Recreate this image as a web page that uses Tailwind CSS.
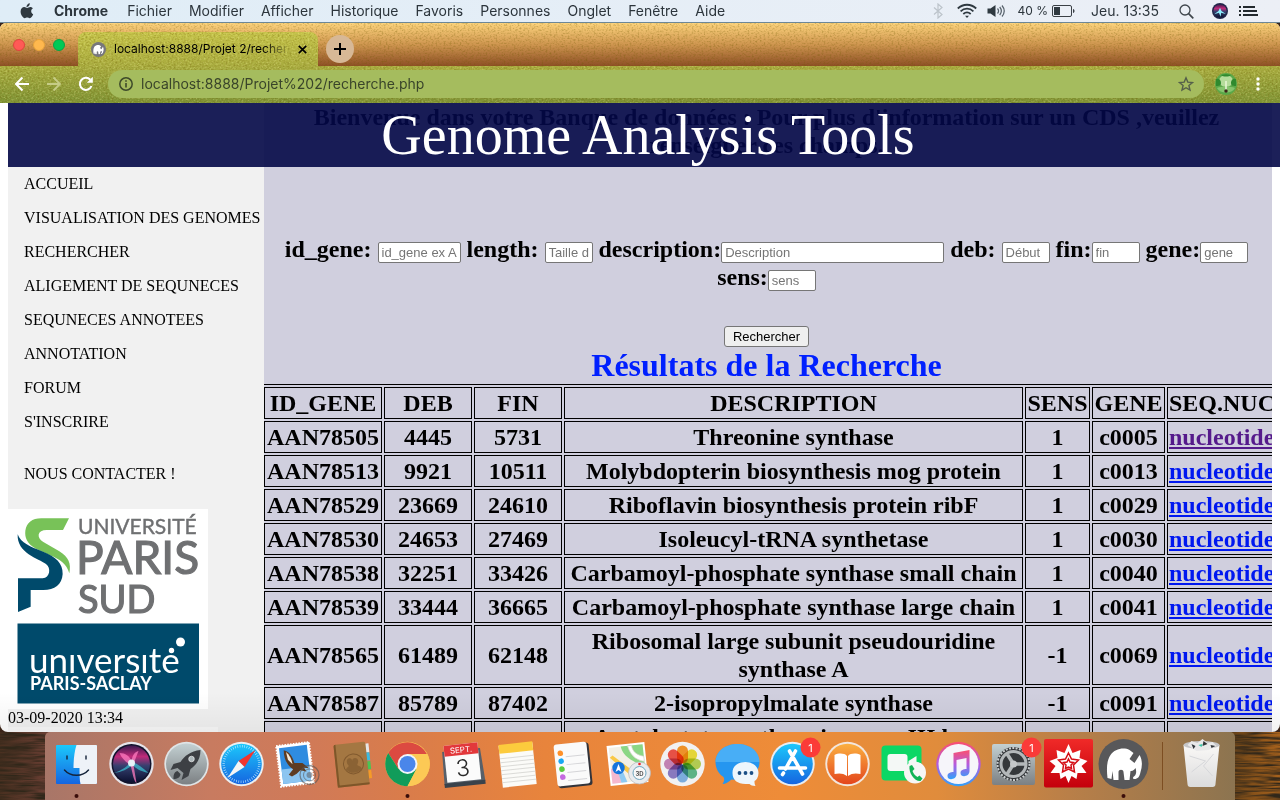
<!DOCTYPE html>
<html lang="fr">
<head>
<meta charset="utf-8">
<title>Genome Analysis Tools</title>
<script src="https://cdn.jsdelivr.net/npm/@tailwindcss/browser@4"></script>
</head>
<body class="h-screen overflow-hidden bg-[#3a2418] font-['Inter','Liberation_Sans',sans-serif] text-black">
<svg class="absolute h-0 w-0" aria-hidden="true">
  <defs>
    <filter id="grain" x="0" y="0" width="100%" height="100%"><feTurbulence type="fractalNoise" baseFrequency="0.5 0.6" numOctaves="2" seed="4"/><feColorMatrix values="0 0 0 0 0.15  0 0 0 0 0.1  0 0 0 0 0  2.2 0 0 0 -1"/></filter>
    <filter id="glint" x="0" y="0" width="100%" height="100%"><feTurbulence type="fractalNoise" baseFrequency="0.5 0.6" numOctaves="2" seed="9"/><feColorMatrix values="0 0 0 0 1  0 0 0 0 1  0 0 0 0 0.4  2.2 0 0 0 -1"/></filter>
    <filter id="wood" x="0" y="0" width="100%" height="100%"><feTurbulence type="fractalNoise" baseFrequency="0.03 0.4" numOctaves="3" seed="3"/><feColorMatrix values="0 0 0 0 0.03  0 0 0 0 0.02  0 0 0 0 0.01  2.4 0 0 0 -0.8"/></filter>
    <linearGradient id="siri" x1="0" y1="0" x2="0" y2="1"><stop offset="0" stop-color="#3b1a4f"/><stop offset=".3" stop-color="#c02a7a"/><stop offset=".55" stop-color="#35406f"/><stop offset="1" stop-color="#0c1030"/></linearGradient>
    <linearGradient id="silver" x1="0" y1="0" x2="0" y2="1"><stop offset="0" stop-color="#c3d0d2"/><stop offset="1" stop-color="#7c8083"/></linearGradient>
    <linearGradient id="sky" x1="0" y1="0" x2="0" y2="1"><stop offset="0" stop-color="#1cc8fb"/><stop offset="1" stop-color="#1565e0"/></linearGradient>
    <linearGradient id="books" x1="0" y1="0" x2="0" y2="1"><stop offset="0" stop-color="#fbb040"/><stop offset="1" stop-color="#e4461c"/></linearGradient>
    <linearGradient id="note" x1="0" y1="0" x2="0" y2="1"><stop offset="0" stop-color="#fb4f6e"/><stop offset=".5" stop-color="#b45be0"/><stop offset="1" stop-color="#2fa0fa"/></linearGradient>
    <linearGradient id="paper" x1="0" y1="0" x2="0" y2="1"><stop offset="0" stop-color="#ffffff"/><stop offset="1" stop-color="#dfe1e4"/></linearGradient>
    <linearGradient id="red" x1="0" y1="0" x2="0" y2="1"><stop offset="0" stop-color="#f02a28"/><stop offset="1" stop-color="#c4000c"/></linearGradient>
    <symbol id="elephant" viewBox="0 0 36 34"><path fill="#fff" d="M1 31C0 22 0 14 4 8 8 2 17 0 23 3l4 3-4 6 5 4 5-8c3 5 3 11 1 17-1 5-3 7-6 7-2 0-2-2 0-3 2-2 2-5 1-8-2 3-4 3-5 3l-1 9h-5l-1-8c0-3-5-3-5 0v8H7l-1-9-1 8z"/></symbol>
  </defs>
</svg>

<div class="flex h-screen flex-col">
  <!-- System menu bar -->
  <header class="flex h-[23px] shrink-0 items-center border-b border-[#6d8796] bg-linear-to-r from-[#dfedf7] to-[#eceff6] text-[14px] leading-[22px] text-[#2c353c]">
    <svg class="ml-5 mr-5 h-[16px] w-[14px]" viewBox="0 0 14 16" fill="#2f3940"><path d="M9.800.2c.1 1.200-.4 2.100-1 2.800-.6.700-1.500 1.200-2.300 1.100-.1-1.100.4-2.100 1-2.700C8.100.700 9 .3 9.800.2zM12.800 5.500c-1 .6-1.600 1.500-1.600 2.700 0 1.400.8 2.500 2 3-.5 1.500-2 4-3.500 4-1 0-1.400-.6-2.500-.6s-1.600.6-2.500.6C3 15.200.6 11.800.6 8.600c0-2.900 1.800-4.500 3.700-4.500 1.200 0 2.100.8 2.900.8.700 0 1.800-.9 3.200-.9 1 0 1.900.5 2.400 1.500z"/></svg>
    <nav class="flex gap-[17px] whitespace-nowrap">
      <a href="#" class="mr-0.5 font-bold">Chrome</a><a href="#">Fichier</a><a href="#">Modifier</a><a href="#">Afficher</a><a href="#">Historique</a><a href="#">Favoris</a><a href="#">Personnes</a><a href="#">Onglet</a><a href="#">Fenêtre</a><a href="#">Aide</a>
    </nav>
    <div class="ml-auto flex items-center whitespace-nowrap pr-[22px]">
      <svg class="mr-[14px] h-4 w-[10px]" viewBox="0 0 10 16" fill="none" stroke="#bcc3ca" stroke-width="1.2"><path d="M1 4.500 9 11.500 5 15V1l4 3.500-8 7"/></svg>
      <svg class="mr-[10px] h-4 w-5" viewBox="0 0 20 16" fill="none" stroke="#2f3940" stroke-width="1.800"><path d="M.8 5.500C6 .5 14 .5 19.200 5.500M3.600 8.300c3.700-3.500 9.100-3.500 12.800 0M6.300 11c2.200-2 5.200-2 7.400 0"/><path d="M8 12.800h4L10 15z" fill="#2f3940" stroke="none"/></svg>
      <svg class="mr-[13px] h-4 w-[18px]" viewBox="0 0 18 16"><path fill="#2f3940" d="M.5 5.500h3L8.500 2v12l-5-3.500h-3z"/><path fill="none" stroke="#55606a" stroke-width="1.200" d="M10.500 5.500c1.300 1.500 1.300 3.500 0 5M12.700 4c2 2.400 2 5.600 0 8M15 2.500c2.700 3.300 2.700 7.700 0 11"/></svg>
      <span class="mr-1 text-[12px]">40 %</span>
      <svg class="mr-4 h-3 w-[23px]" viewBox="0 0 23 12"><rect x=".5" y=".5" width="19" height="11" rx="1.500" fill="none" stroke="#3a4046"/><rect x="2" y="2" width="6" height="8" fill="#2f3940"/><path fill="#3a4046" d="M21 4c2 .5 2 3.500 0 4z"/></svg>
      <span class="mr-5">Jeu. 13:35</span>
      <svg class="mr-[18px] h-[15px] w-[15px]" viewBox="0 0 15 15" fill="none" stroke="#3f464c" stroke-width="1.300"><circle cx="6" cy="6" r="5"/><path d="m9.600 9.600 4.700 4.700" stroke-width="1.700"/></svg>
      <svg class="mr-[11px] h-4 w-4" viewBox="-22 -22 44 44"><circle r="22" fill="#22264a"/><circle r="18" fill="url(#siri)"/><path fill="#8ff0ff" d="M0-9 4 0 16 8 3 5 2 16-3 5-16 9-4 0z"/></svg>
      <svg class="h-3 w-[19px]" viewBox="0 0 19 12" stroke="#22282d" stroke-width="2"><path d="M0 2h2M0 6h2M0 10h2M4 2h12M4 6h14M4 10h15"/></svg>
    </div>
  </header>

  <!-- Browser window -->
  <div class="relative flex min-h-0 flex-1 flex-col overflow-hidden rounded-t-md rounded-b-lg bg-white">
    <div class="relative flex h-[43px] shrink-0 items-end bg-linear-to-b from-[#fdd47e] via-[#cf9650] to-[#8e5026]">
      <svg class="absolute inset-0 h-full w-full opacity-40" aria-hidden="true"><rect width="100%" height="100%" filter="url(#grain)"/></svg>
      <div class="relative mb-[15px] ml-[13px] flex gap-2">
        <button aria-label="Fermer la fenêtre" class="h-3 w-3 rounded-full border border-[#e0443e] bg-[#ff5a56]"></button>
        <button aria-label="Réduire" class="h-3 w-3 rounded-full border border-[#e8a33c] bg-[#ffb84e]"></button>
        <button aria-label="Agrandir" class="h-3 w-3 rounded-full border border-[#0aa346] bg-[#00ca56]"></button>
      </div>
      <div class="relative ml-[13px] flex h-[34px] w-[240px] items-center overflow-hidden rounded-t-lg bg-linear-to-b from-[#c6c44a] to-[#a9ac3f] pl-[13px] pr-[10px]">
        <svg class="absolute inset-0 h-full w-full" aria-hidden="true"><rect width="100%" height="100%" filter="url(#grain)" opacity=".4"/><rect width="100%" height="100%" filter="url(#glint)" opacity=".35"/></svg>
        <svg class="relative mr-2 h-[15px] w-[15px] shrink-0" viewBox="0 0 15 15"><circle cx="7.500" cy="7.500" r="7.500" fill="#77777b"/><use href="#elephant" x="2" y="2.500" width="11" height="10"/></svg>
        <span class="relative w-[176px] overflow-hidden whitespace-nowrap text-[12px] leading-4 mask-r-from-85%">localhost:8888/Projet 2/recherche.php</span>
        <button aria-label="Fermer l'onglet" class="relative ml-2"><svg class="h-[9px] w-[9px]" viewBox="0 0 9 9" stroke="#000" stroke-width="1.700"><path d="m.8.800 7.400 7.400M8.200.800.800 8.200"/></svg></button>
      </div>
      <button aria-label="Nouvel onglet" class="relative mb-[3px] ml-2 flex h-7 w-7 items-center justify-center rounded-full bg-[#d7b896]"><svg class="h-3 w-3" viewBox="0 0 12 12" stroke="#000" stroke-width="2"><path d="M6 0v12M0 6h12"/></svg></button>
    </div>

    <div class="relative flex h-[37px] shrink-0 items-center bg-linear-to-b from-[#a9ac3f] to-[#7d9234] pb-px pl-[14px] pr-5">
      <svg class="absolute inset-0 h-full w-full" aria-hidden="true"><rect width="100%" height="100%" filter="url(#grain)" opacity=".4"/><rect width="100%" height="100%" filter="url(#glint)" opacity=".35"/></svg>
      <button aria-label="Retour" class="relative"><svg class="h-4 w-4" viewBox="0 0 16 16" fill="none" stroke="#fff" stroke-width="2"><path d="M15 8H2M8.500 1.500 2 8l6.500 6.500"/></svg></button>
      <button aria-label="Suivant" class="relative ml-4"><svg class="h-4 w-4" viewBox="0 0 16 16" fill="none" stroke="#c6cc86" stroke-width="1.800"><path d="M1 8h13M7.500 1.500 14 8l-6.500 6.500"/></svg></button>
      <button aria-label="Actualiser" class="relative ml-4"><svg class="h-4 w-4" viewBox="0 0 16 16"><path d="M13.500 10A6 6 0 1 1 12.300 3.800" fill="none" stroke="#fff" stroke-width="2"/><path fill="#fff" d="M14.800.8v6H8.800z"/></svg></button>
      <div class="relative ml-[14px] flex h-7 flex-1 items-center rounded-full bg-[#a5bc5e] pl-[11px] pr-[10px]">
        <svg class="h-[14px] w-[14px] shrink-0" viewBox="0 0 14 14"><circle cx="7" cy="7" r="6.200" fill="none" stroke="#3d4a2a" stroke-width="1.500"/><path d="M7 6v4.500M7 3.300v1.500" stroke="#3d4a2a" stroke-width="1.600"/></svg>
        <input aria-label="Adresse" value="localhost:8888/Projet%202/recherche.php" class="ml-2 min-w-0 flex-1 bg-transparent text-[14px] leading-5 text-[#39442a] outline-none">
        <button aria-label="Ajouter aux favoris"><svg class="h-4 w-4" viewBox="0 0 16 16" fill="none" stroke="#55604a" stroke-width="1.400"><path d="m8 1.800 1.800 4.300 4.700.4-3.600 3 1.100 4.600L8 11.700l-4 2.400 1.100-4.600-3.600-3 4.700-.4z"/></svg></button>
      </div>
      <button aria-label="Profil" class="relative ml-[11px]"><svg class="h-[22px] w-[22px]" viewBox="0 0 22 22"><circle cx="11" cy="11" r="11" fill="#5aa848"/><ellipse cx="11" cy="8" rx="7" ry="6" fill="#b4dc9a"/><path fill="#2f8a2e" d="M1 6c3-1 5 1 5 4S3 13 1 13zM21 6c-3-1-5 1-5 4s3 3 5 3zM6 2c3-1 7-1 10 0-2 2-8 2-10 0z"/><path fill="#86c46e" d="M2 15c5-2 13-2 18 0-3 6-15 6-18 0z"/><path stroke="#e6f5d4" stroke-width="1.600" d="M11 8v9"/><circle cx="11" cy="18" r="1.700" fill="#3b2417"/></svg></button>
      <button aria-label="Menu" class="relative ml-[19px]"><svg class="h-[14px] w-1" viewBox="0 0 4 14" fill="#fff"><circle cx="2" cy="2" r="1.700"/><circle cx="2" cy="7" r="1.700"/><circle cx="2" cy="12" r="1.700"/></svg></button>
    </div>

    <!-- Web page -->
    <main class="relative flex min-h-0 flex-1 overflow-hidden px-2 font-['Liberation_Serif',serif]">
      <div class="absolute left-2 top-0 z-10 w-full bg-[#030847]/90 text-center text-[56px] leading-[64px] text-white"><h1>Genome Analysis Tools</h1></div>

      <aside class="w-64 shrink-0 bg-[#f1f1f1] pt-16 text-[16px] leading-[18px]">
        <nav class="flex flex-col whitespace-nowrap pb-[18px]">
          <a href="#" class="py-2 pl-4">ACCUEIL</a>
          <a href="#" class="py-2 pl-4">VISUALISATION DES GENOMES</a>
          <a href="#" class="py-2 pl-4">RECHERCHER</a>
          <a href="#" class="py-2 pl-4">ALIGEMENT DE SEQUNECES</a>
          <a href="#" class="py-2 pl-4">SEQUNECES ANNOTEES</a>
          <a href="#" class="py-2 pl-4">ANNOTATION</a>
          <a href="#" class="py-2 pl-4">FORUM</a>
          <a href="#" class="py-2 pl-4">S'INSCRIRE</a>
          <a href="#" class="mt-[18px] py-2 pl-4">NOUS CONTACTER !</a>
        </nav>
        <svg class="block h-[200px] w-[200px] bg-white" viewBox="0 0 200 200" role="img" aria-label="Université Paris Sud, Université Paris-Saclay">
          <g transform="scale(.33333) translate(-24 -27)">
            <path fill="#78c258" d="M207 55 189 90H140C112 90 108 112 130 126L178 154C206 172 214 190 208 220 200 192 180 178 150 166L108 146C80 130 74 112 76 92 80 68 96 55 124 55z"/>
            <path fill="#004a6b" d="M53 103C62 130 92 140 126 154 170 172 188 190 188 222 186 254 164 270 130 270H92V320L54 336V235H128C150 233 154 204 138 192 116 176 50 160 53 103z"/>
          </g>
          <g fill="#6f7072" stroke="#6f7072" font-family="Lato, sans-serif">
            <text x="70" y="25" font-size="21" stroke-width=".4">UNIVERSITÉ</text>
            <text x="68" y="65" font-size="46" stroke-width="1.200">PARIS</text>
            <text x="70" y="104" font-size="38" stroke-width="1.200">SUD</text>
          </g>
          <rect x="9.500" y="114.500" width="181.500" height="80" fill="#004a6b"/>
          <g fill="#fff" font-family="Lato, sans-serif">
            <text x="21" y="164" font-size="35">unıversıte</text>
            <text x="22" y="181" font-size="18" font-weight="bold">PARIS-SACLAY</text>
            <circle cx="172.500" cy="133" r="4.500"/><circle cx="163.500" cy="141.500" r="2.700"/>
          </g>
        </svg>
        <p>03-09-2020 13:34</p>
        <div class="h-10 w-[210px] bg-[#f8f8f8]"></div>
      </aside>

      <section class="min-w-0 flex-1 overflow-hidden bg-[#d0cfde] pr-[3px] text-center text-[24px] font-bold leading-7">
        <h2>Bienvenue dans votre Banque de données : Pour plus d'information sur un CDS ,veuillez renseigner ces champs.</h2>
        <form class="pt-[76px]">
          <label for="id">id_gene:</label> <input id="id" placeholder="id_gene ex AAN78505" class="h-[21px] w-[83px] rounded-[2px] border border-[#767676] bg-white px-[3px] text-[13px] font-normal leading-[17px] font-['Liberation_Sans',sans-serif] placeholder:text-[#757575]">
          <label for="len">length:</label> <input id="len" placeholder="Taille de la sequence" class="h-[21px] w-12 rounded-[2px] border border-[#767676] bg-white px-[3px] text-[13px] font-normal leading-[17px] font-['Liberation_Sans',sans-serif] placeholder:text-[#757575]">
          <label for="desc">description:</label><input id="desc" placeholder="Description" class="h-[21px] w-[223px] rounded-[2px] border border-[#767676] bg-white px-[3px] text-[13px] font-normal leading-[17px] font-['Liberation_Sans',sans-serif] placeholder:text-[#757575]">
          <label for="deb">deb:</label> <input id="deb" placeholder="Début" class="h-[21px] w-12 rounded-[2px] border border-[#767676] bg-white px-[3px] text-[13px] font-normal leading-[17px] font-['Liberation_Sans',sans-serif] placeholder:text-[#757575]">
          <label for="fin">fin:</label><input id="fin" placeholder="fin" class="h-[21px] w-12 rounded-[2px] border border-[#767676] bg-white px-[3px] text-[13px] font-normal leading-[17px] font-['Liberation_Sans',sans-serif] placeholder:text-[#757575]">
          <label for="gene">gene:</label><input id="gene" placeholder="gene" class="h-[21px] w-12 rounded-[2px] border border-[#767676] bg-white px-[3px] text-[13px] font-normal leading-[17px] font-['Liberation_Sans',sans-serif] placeholder:text-[#757575]">
          <label for="sens">sens:</label><input id="sens" placeholder="sens" class="h-[21px] w-12 rounded-[2px] border border-[#767676] bg-white px-[3px] text-[13px] font-normal leading-[17px] font-['Liberation_Sans',sans-serif] placeholder:text-[#757575]">
          <button type="submit" class="mx-auto mt-[35px] block h-[21px] w-[85px] rounded-[3px] border border-[#767676] bg-[#efefef] text-[13px] font-normal leading-[17px] font-['Liberation_Sans',sans-serif]">Rechercher</button>
        </form>
        <h2 class="text-[32px] leading-[37px] text-[#0020ff]">Résultats de la Recherche</h2>
        <table class="-ml-[2px] w-[1080px] table-fixed border-separate border-spacing-[2px] border-t border-black [&_td]:border [&_td]:border-black [&_td]:p-px [&_th]:border [&_th]:border-black [&_th]:p-px [&_a]:text-[#0018f0] [&_a]:underline [&_td:last-child]:text-left [&_th:last-child]:text-left">
          <colgroup><col class="w-[118px]"><col class="w-[88px]"><col class="w-[88px]"><col class="w-[459px]"><col class="w-[65px]"><col class="w-[73px]"><col></colgroup>
          <thead><tr><th>ID_GENE</th><th>DEB</th><th>FIN</th><th>DESCRIPTION</th><th>SENS</th><th>GENE</th><th>SEQ.NUCL</th></tr></thead>
          <tbody>
            <tr><td>AAN78505</td><td>4445</td><td>5731</td><td>Threonine synthase</td><td>1</td><td>c0005</td><td><a href="#" class="text-[#551a8b]!">nucleotides</a></td></tr>
            <tr><td>AAN78513</td><td>9921</td><td>10511</td><td>Molybdopterin biosynthesis mog protein</td><td>1</td><td>c0013</td><td><a href="#">nucleotides</a></td></tr>
            <tr><td>AAN78529</td><td>23669</td><td>24610</td><td>Riboflavin biosynthesis protein ribF</td><td>1</td><td>c0029</td><td><a href="#">nucleotides</a></td></tr>
            <tr><td>AAN78530</td><td>24653</td><td>27469</td><td>Isoleucyl-tRNA synthetase</td><td>1</td><td>c0030</td><td><a href="#">nucleotides</a></td></tr>
            <tr><td>AAN78538</td><td>32251</td><td>33426</td><td>Carbamoyl-phosphate synthase small chain</td><td>1</td><td>c0040</td><td><a href="#">nucleotides</a></td></tr>
            <tr><td>AAN78539</td><td>33444</td><td>36665</td><td>Carbamoyl-phosphate synthase large chain</td><td>1</td><td>c0041</td><td><a href="#">nucleotides</a></td></tr>
            <tr><td>AAN78565</td><td>61489</td><td>62148</td><td>Ribosomal large subunit pseudouridine synthase A</td><td>-1</td><td>c0069</td><td><a href="#">nucleotides</a></td></tr>
            <tr><td>AAN78587</td><td>85789</td><td>87402</td><td>2-isopropylmalate synthase</td><td>-1</td><td>c0091</td><td><a href="#">nucleotides</a></td></tr>
            <tr><td>AAN78590</td><td>89617</td><td>91341</td><td>Acetolactate synthase isozyme III large subunit</td><td>1</td><td>c0094</td><td><a href="#">nucleotides</a></td></tr>
          </tbody>
        </table>
      </section>
      <div class="pointer-events-none absolute inset-x-0 bottom-0 h-10 bg-linear-to-b from-black/0 to-black/5"></div>
    </main>
  </div>

  <!-- Desktop and dock -->
  <footer class="relative flex h-[68px] shrink-0 bg-[linear-gradient(90deg,#4a3020_0%,#6b3f34_4%,#6b4a28_50%,#6b4418_96%,#a8621c_100%)] px-[45px]">
    <svg class="absolute inset-0 h-full w-full" aria-hidden="true"><rect width="100%" height="100%" filter="url(#wood)"/></svg>
    <div class="relative flex min-w-0 flex-1 items-stretch rounded-t-[5px] bg-[linear-gradient(90deg,#a87668_0%,#c87b60_14%,#d07a58_22%,#d97c4b_30%,#e8843c_42%,#ee8c38_62%,#e08c3c_75%,#b97f48_86%,#8c7450_100%)] pl-1">
      <div class="flex min-w-0 flex-1 [&>button]:flex [&>button]:min-w-0 [&>button]:flex-1 [&>button]:justify-center [&_svg]:h-[68px] [&_svg]:w-[55px] [&_svg]:shrink-0 [&_svg]:overflow-visible">
        <button aria-label="Finder"><svg viewBox="-27.500 -32 55 68"><rect x="-20.500" y="-19" width="41" height="39" rx="1" fill="url(#sky)"/><path fill="#eef2f8" d="M0-19h19.500q1 0 1 1v37q0 1-1 1H4C3 16 3 10 3 4H-3C-3-5-2-13 0-19z"/><path fill="none" stroke="#14233a" stroke-width="1.400" stroke-linecap="round" d="M-9.500-8v3M9.500-8v3M-12 6c6 7 18 7 24 0"/><circle cy="32" r="2" fill="#3b0d0a"/></svg></button>
        <button aria-label="Siri"><svg viewBox="-27.500 -32 55 68"><circle r="22.200" fill="#e6e4ea"/><circle r="20" fill="#11132c"/><circle r="18.500" fill="url(#siri)"/><path fill="#3cc4d6" opacity=".7" d="M-18 9C-8 6-3 1 0-3 5 0 11 3 17 9 8 7 4 4 1 1-4 5-9 8-18 9z"/><path fill="#ff7cc0" opacity=".75" d="M-12-11C-6-11-2-8 0-3 1-9 3-12 7-13 5-8 3-3 2 1L5 19C2 17 1 8-1 1-6-2-10-6-12-11z"/><circle cy="-1" r="3.500" fill="#eaffff" opacity=".9"/></svg></button>
        <button aria-label="Launchpad"><svg viewBox="-27.500 -32 55 68"><circle r="22.200" fill="#dfe4e6"/><circle r="20.500" fill="url(#silver)"/><path fill="#3d4044" d="M14-14C4-13-2-8-6-2L-13 0-16 6-9 4-3 9-5 16 2 12 4 5C10 1 14-5 14-14zM-9 7C-13 8-13 12-13 15-9 15-6 13-6 10z"/><circle cx="5" cy="-5" r="2.800" fill="#aeb8bb" stroke="#fff" stroke-width=".6"/></svg></button>
        <button aria-label="Safari"><svg viewBox="-27.500 -32 55 68"><circle r="22.200" fill="#eceff1"/><circle r="20.300" fill="url(#sky)"/><circle r="17.800" fill="none" stroke="#c7ecff" stroke-width="2.500" stroke-dasharray=".6 1.730"/><path fill="#f2352f" d="M14-14-3-3 3 3z"/><path fill="#f5f5f5" d="M-14 14-3-3 3 3z"/></svg></button>
        <button aria-label="Mail"><svg viewBox="-27.500 -32 55 68"><g transform="translate(-2 0) rotate(-7)"><rect x="-16" y="-20" width="33" height="41" fill="#fff" stroke="#fff" stroke-width="2" stroke-dasharray="1.500 1.300"/><rect x="-13.500" y="-17.500" width="28" height="36" fill="#2f8ce0"/><path fill="#8cc5f0" d="M-13.500 4h28v14.500h-28z"/><path fill="#5e3c22" d="M-9-15C-3-13-1-7 0-1L8 0 14 6 9 5 11 9 5 7 1 10-4 12-7 10-2 5C-8 0-10-7-9-15z"/><path fill="#f2e8d8" d="M-7-13C-4-10-2-5-2 0L-6-5z"/></g><circle cx="13" cy="11" r="9.500" fill="none" stroke="#595451" stroke-width="1.300" opacity=".6"/><circle cx="13" cy="11" r="6" fill="none" stroke="#595451" opacity=".6"/><circle cx="13" cy="11" r="3" fill="#595451" opacity=".5"/></svg></button>
        <button aria-label="Contacts"><svg viewBox="-27.500 -32 55 68"><g transform="rotate(-6)"><path fill="#e6e6e6" d="M14-19h4v9h-4z"/><path fill="#3bbbe0" d="M14-10h4v8h-4z"/><path fill="#48c554" d="M14-1h4v8h-4z"/><path fill="#f59b28" d="M14 8h4v8h-4z"/><rect x="-17" y="-21" width="32" height="43" rx="2" fill="#a47742"/><path fill="#7e5629" d="M-17-19q0-2 2-2v43q-2 0-2-2zM-17 20h32v2h-32z"/><circle cx="1" r="10" fill="none" stroke="#80592e" stroke-width="1"/><path fill="#8a6234" d="M-7 5c1-3 3-2 3-4-3-3-1-8 2-7 1 0 2 1 2 3 0-3 5-4 6 0 0 3-2 4-1 5 2 1 3 1 4 4C4 10-3 10-7 5z"/></g></svg></button>
        <button aria-label="Chrome"><svg viewBox="-27.500 -32 55 68"><circle r="22.300" fill="#fcc955"/><path fill="#dc4a41" d="M-19.300-11.100A22.300 22.300 0 0 1 19.300-10H0L-9 5z"/><path fill="#119c5a" d="M-19.300-11.100A22.300 22.300 0 0 0 0 22.300L9 5-9 5z"/><path fill="#fcc955" d="M0-10h19.900A22.300 22.300 0 0 1 0 22.300L9 5z"/><circle r="10" fill="#f2f5fa"/><circle r="8" fill="#4a86ea"/><circle cy="32" r="2" fill="#3b0d0a"/></svg></button>
        <button aria-label="Calendrier"><svg viewBox="-27.500 -32 55 68"><g transform="rotate(-6)"><path fill="#57606a" d="M-19-14-20 19H21L19-14z"/><path fill="#39424b" d="M-20 18H21v4h-41z"/><rect x="-17" y="-20" width="34" height="37" fill="#fbfbfb"/><rect x="-17" y="-20" width="34" height="11" fill="#e2383b"/><text y="-11.500" font-family="Inter, sans-serif" font-size="8" fill="#fff" text-anchor="middle">SEPT.</text><text y="12" font-family="Inter, sans-serif" font-size="23" font-weight="300" fill="#2a2a2a" text-anchor="middle">3</text></g></svg></button>
        <button aria-label="Notes"><svg viewBox="-27.500 -32 55 68"><g transform="rotate(-6)"><rect x="-17" y="-20" width="34" height="42" fill="#fbfbf8"/><rect x="-17" y="-21" width="34" height="9" fill="#fccb3d"/><path stroke="#d4d4d0" stroke-width=".8" d="M-17-7h34M-17-3h34M-17 1h34M-17 5h34M-17 9h34M-17 13h34M-17 17h34"/></g></svg></button>
        <button aria-label="Rappels"><svg viewBox="-27.500 -32 55 68"><g transform="rotate(-6)"><rect x="-16" y="-20" width="34" height="43" rx="3" fill="#33343a"/><rect x="-17" y="-21" width="33" height="42" rx="3" fill="#fafafa"/><path stroke="#d5d5d8" d="M-6-8h19M-6 0h19M-6 8h19M-6 16h19"/><circle cx="-11" cy="-12" r="2.800" fill="#ff9028"/><circle cx="-11" cy="-4" r="2.800" fill="#18a7f2"/><circle cx="-11" cy="4" r="2.800" fill="#5ccb3f"/><circle cx="-11" cy="12" r="2.800" fill="#c56ae0"/></g></svg></button>
        <button aria-label="Plans"><svg viewBox="-27.500 -32 55 68"><g transform="rotate(-6)"><rect x="-19" y="-20" width="38" height="40" fill="#fff"/><rect x="-17" y="-18" width="34" height="36" fill="#f3f0e6"/><path fill="#8bd684" d="M-5-18h22V6C12 0-3-4-5-18z"/><path fill="#fff" stroke="#d7d5cc" stroke-width=".7" d="M2-18C4-6 12-2 17-1V-6C10-8 6-12 6-18z"/><path fill="#f9c846" d="M-17-8-14-10 12 14 8 18z"/><path fill="#f5b8cf" d="M-17 3-10 4-8 18h-9z"/><path fill="#8ecaf2" d="M-10 8h5l3 10h-6z"/></g><circle cx="-9" cy="4" r="6.200" fill="#1474dc"/><path fill="#fff" d="m-9 0 3 8-3-2-3 2z"/><circle cx="12" cy="9" r="11" fill="#e9ebee" stroke="#b5b8bd" stroke-width=".7"/><circle cx="12" cy="9" r="6.500" fill="#f8f8f8" stroke="#6fa6bf"/><text x="12" y="11.500" font-family="Inter, sans-serif" font-size="6" font-weight="bold" fill="#555" text-anchor="middle">3D</text><circle cx="12" cy="0" r="1.300" fill="#e22"/></svg></button>
        <button aria-label="Photos"><svg viewBox="-27.500 -32 55 68"><circle r="22.200" fill="#f1f1f2"/><g class="[&>rect]:mix-blend-multiply"><rect x="-5.500" y="-18.500" width="11" height="18" rx="5.500" fill="#fb9a2c"/><rect x="-5.500" y="-18.500" width="11" height="18" rx="5.500" fill="#f2e23c" transform="rotate(45)"/><rect x="-5.500" y="-18.500" width="11" height="18" rx="5.500" fill="#bcd656" transform="rotate(90)"/><rect x="-5.500" y="-18.500" width="11" height="18" rx="5.500" fill="#62bd8c" transform="rotate(135)"/><rect x="-5.500" y="-18.500" width="11" height="18" rx="5.500" fill="#82b6e8" transform="rotate(180)"/><rect x="-5.500" y="-18.500" width="11" height="18" rx="5.500" fill="#9080c8" transform="rotate(225)"/><rect x="-5.500" y="-18.500" width="11" height="18" rx="5.500" fill="#cc88bc" transform="rotate(270)"/><rect x="-5.500" y="-18.500" width="11" height="18" rx="5.500" fill="#f4564a" transform="rotate(315)"/></g></svg></button>
        <button aria-label="Messages"><svg viewBox="-27.500 -32 55 68"><path fill="#2596f0" d="M0-20c13 0 22 8 22 18S13 16 0 16l-6-.6C-9 18-12 20-15 20c2-3 2-5 1-7-5-3-8-9-8-15 0-10 9-18 22-18z"/><path fill="#6cc6fb" opacity=".5" d="M0-20c13 0 22 8 22 18H-22c0-10 9-18 22-18z"/><path fill="#eef6fc" d="M8-2c8 0 13 5 13 11 0 4-2 7-4 8 0 2 0 3 1 5-3 0-5-1-6-2H8C0 20-5 16-5 9S0-2 8-2z"/><g fill="#1b4f86"><circle cx="2" cy="9" r="1.900"/><circle cx="8" cy="9" r="1.900"/><circle cx="14" cy="9" r="1.900"/></g></svg></button>
        <button aria-label="App Store"><svg viewBox="-27.500 -32 55 68"><circle r="22.200" fill="#e8edf2"/><circle r="20.300" fill="url(#sky)"/><g stroke="#fff" stroke-width="3.600" stroke-linecap="round"><path d="M-3-13 10 10M3-13-7 5M-13 4h26M-9 9l-1 1.500"/></g><circle cx="18" cy="-16.500" r="10" fill="#fb3b38"/><text x="18" y="-12.500" font-family="Inter, sans-serif" font-size="11" fill="#fff" text-anchor="middle">1</text></svg></button>
        <button aria-label="Livres"><svg viewBox="-27.500 -32 55 68"><circle r="22.200" fill="#f3e6dc"/><circle r="20.300" fill="url(#books)"/><path fill="#fff" d="M-.5-8C-3-11-9-11-13-9V10c4-1 9-1 12.500 2zM.5-8C3-11 9-11 13-9V10C9 9 4 9 .5 12z"/></svg></button>
        <button aria-label="FaceTime"><svg viewBox="-27.500 -32 55 68"><rect x="-21" y="-18.500" width="40" height="35" rx="4" fill="#0bd765"/><rect x="-15" y="-10" width="20" height="17" rx="3" fill="#f4f8f6"/><path fill="#f4f8f6" d="M6-3 14-8V6L6 1z"/><circle cx="12.500" cy="8.500" r="11" fill="#f6f6f6"/><path fill="#12b356" d="m7 2 2.500-1 2.500 4-2 2c1 3 3 5 5 6l2-1.500 3 3-2 2.500C12 17.500 6 9 7 2z"/></svg></button>
        <button aria-label="iTunes"><svg viewBox="-27.500 -32 55 68"><circle r="22.200" fill="url(#note)"/><circle r="20" fill="#f6f5fa"/><path fill="url(#note)" d="M-5-11 11-14V7c0 6-9 7-9 2 0-3 3-4 6-4V-6L-2-4V10c0 6-9 7-9 2 0-3 3-4 6-4z"/></svg></button>
        <button aria-label="Préférences Système"><svg viewBox="-27.500 -32 55 68"><rect x="-21.500" y="-20" width="43" height="41" rx="2" fill="url(#silver)"/><circle r="17" fill="#35383b"/><circle r="16" fill="none" stroke="#c9cdcf" stroke-width="2" stroke-dasharray="2 1.350"/><circle r="12.500" fill="none" stroke="#b4b8ba" stroke-width="3"/><path stroke="#b4b8ba" stroke-width="3.500" d="M0 0h13M0 0-7-11M0 0-7 11"/><circle r="3.500" fill="#c5c8ca"/><circle cx="18" cy="-16.500" r="10" fill="#fb3b38"/><text x="18" y="-12.500" font-family="Inter, sans-serif" font-size="11" fill="#fff" text-anchor="middle">1</text></svg></button>
        <button aria-label="Mathematica"><svg viewBox="-27.500 -32 55 68"><rect x="-24.500" y="-25" width="49" height="48.500" rx="2" fill="url(#red)"/><path fill="#fff" d="M0-20 4-11 12-14 11-6 19-3 13 2 18 9 9 9 8 15 3 12 0 19-3 12-8 15-9 9-18 9-13 2-19-3-11-6-12-14-4-11z"/><path fill="none" stroke="#d40d14" stroke-width="1.500" d="m0-11 3 6 7 1-5 5 1 7-6-3-6 3 1-7-5-5 7-1zM0-5l1.500 3 3.500.5-2.500 2.500.5 3.500L0 3l-3 1.500.5-3.500L-5-1.500-1.500-2z"/></svg></button>
        <button aria-label="MAMP"><svg viewBox="-27.500 -32 55 68"><circle r="25" fill="#58585a"/><use href="#elephant" x="-18" y="-17" width="38" height="34"/><circle cy="32" r="2" fill="#3b0d0a"/></svg></button>
      </div>
      <div class="flex w-[84px] items-center">
        <div class="ml-[11px] h-12 w-px bg-[#7d4e22]"></div>
        <button aria-label="Corbeille" class="ml-[11px]"><svg class="h-[68px] w-[55px]" viewBox="-27.500 -32 55 68"><path fill="url(#paper)" opacity=".95" d="M-18-19h36L14 20q0 3-3 3h-22q-3 0-3-3z"/><ellipse cy="-19" rx="18" ry="4" fill="#c5c5c7"/><path fill="#e9e9ea" d="m-14-19 4-4 6 2 5-4 5 4 5-1 4 4-8 4-12 1z"/><path fill="#303438" d="m-10-20 4 2-2 3zm12-3 4 3-5 2zm7 4 5 1-4 2z"/><path fill="#35c5a5" d="m-3-19 4-1-1 3z"/><path fill="none" stroke="#d6d7da" d="M-12-8 4-3-10 8M12-10 2 2l9 10"/></svg></button>
      </div>
    </div>
  </footer>
</div>
</body>
</html>
